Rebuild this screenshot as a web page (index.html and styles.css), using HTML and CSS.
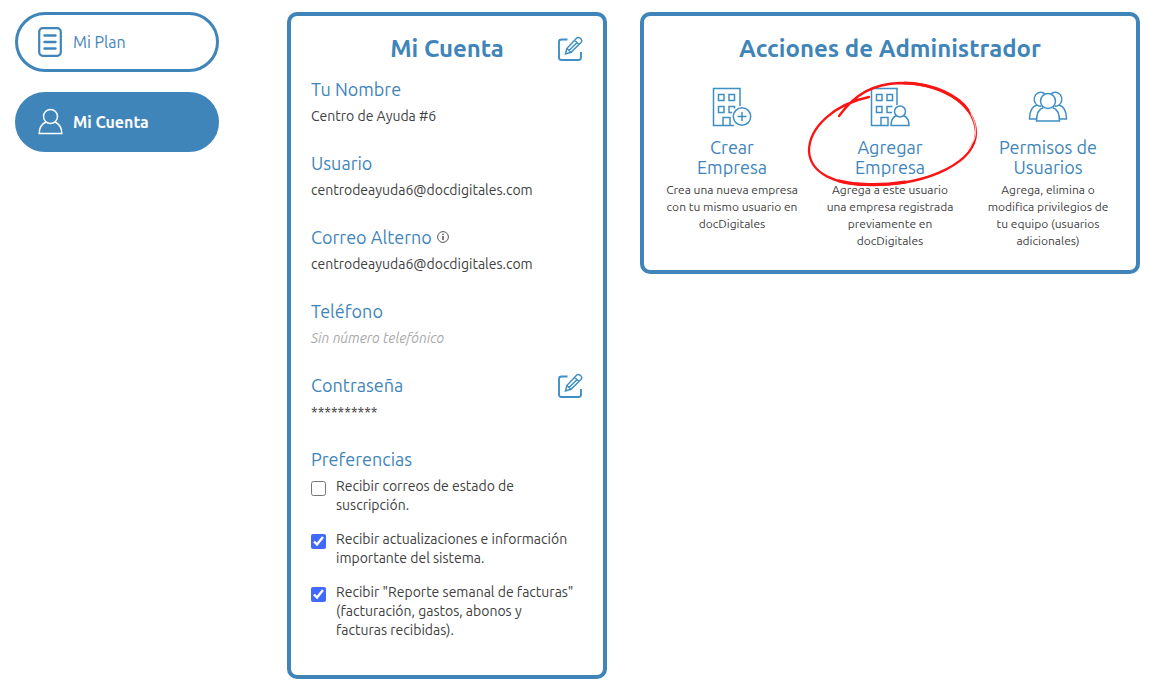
FILE: index.html
```html
<!DOCTYPE html>
<html lang="es">
<head>
<meta charset="utf-8">
<title>Mi Cuenta</title>
<link rel="stylesheet" href="styles.css">
</head>
<body>
<div class="page">
  <nav class="sidebar">
    <a class="pill" href="#plan">
      <svg class="pill-icon" viewBox="0 0 26 30" width="26" height="30"><rect x="2.200" y="1.200" width="21.600" height="27.600" rx="3.500" stroke-width="2.200"/><path d="M7.500 8.500h11M7.500 15h11M7.500 21.500h11" stroke-width="2.400" stroke-linecap="round"/></svg>
      Mi Plan
    </a>
    <a class="pill pill-active" href="#cuenta" aria-current="page">
      <svg class="pill-icon" viewBox="0 0 26 30" width="26" height="30"><circle cx="13.500" cy="9.500" r="7" stroke-width="1.500"/><path d="M9 15C4.500 17 2.200 21 2.200 26.500H24.800C24.800 21 22.500 17 18 15" stroke-width="1.500"/></svg>
      Mi Cuenta
    </a>
  </nav>

  <main class="card account">
    <header class="account-head">
      <h1 class="card-title">Mi Cuenta</h1>
      <button class="edit" type="button" aria-label="Editar cuenta">
        <svg viewBox="0 0 26 26" width="26" height="26"><path d="M10.500 3.500H4.500Q2 3.500 2 6V21.500Q2 24 4.500 24H21.500Q24 24 24 21.500V16" stroke-width="1.900"/><path d="M8.500 18L9.800 12.500L19.500 2.200Q21.300 .5 23.500 2.500T24 6.500L14 16.300ZM9.800 12.500L14 16.300M17.500 4.300L21.800 8.300M12 14.500L20.200 6.500" stroke-width="1.500"/></svg>
      </button>
    </header>
    <section class="field">
      <h2 class="label">Tu Nombre</h2>
      <p class="value">Centro de Ayuda #6</p>
    </section>
    <section class="field">
      <h2 class="label">Usuario</h2>
      <p class="value">centrodeayuda6@docdigitales.com</p>
    </section>
    <section class="field">
      <h2 class="label">Correo Alterno
        <svg class="info" viewBox="0 0 12 12" width="12" height="12"><circle cx="6" cy="6" r="5.400"/><path d="M6 5v4M6 2.700v1.300" stroke-width="1.500"/></svg>
      </h2>
      <p class="value">centrodeayuda6@docdigitales.com</p>
    </section>
    <section class="field">
      <h2 class="label">Teléfono</h2>
      <p class="value value-empty">Sin número telefónico</p>
    </section>
    <section class="field field-editable">
      <div>
        <h2 class="label">Contraseña</h2>
        <p class="value">**********</p>
      </div>
      <button class="edit" type="button" aria-label="Editar contraseña">
        <svg viewBox="0 0 26 26" width="26" height="26"><path d="M10.500 3.500H4.500Q2 3.500 2 6V21.500Q2 24 4.500 24H21.500Q24 24 24 21.500V16" stroke-width="1.900"/><path d="M8.500 18L9.800 12.500L19.500 2.200Q21.300 .5 23.500 2.500T24 6.500L14 16.300ZM9.800 12.500L14 16.300M17.500 4.300L21.800 8.300M12 14.500L20.200 6.500" stroke-width="1.500"/></svg>
      </button>
    </section>
    <section>
      <h2 class="label">Preferencias</h2>
      <div class="prefs">
        <label class="pref"><input class="check" type="checkbox"><span>Recibir correos de estado de suscripción.</span></label>
        <label class="pref"><input class="check" type="checkbox" checked><span>Recibir actualizaciones e información importante del sistema.</span></label>
        <label class="pref"><input class="check" type="checkbox" checked><span>Recibir "Reporte semanal de facturas" (facturación, gastos, abonos y facturas recibidas).</span></label>
      </div>
    </section>
  </main>

  <section class="card admin">
    <h2 class="card-title">Acciones de Administrador</h2>
    <div class="actions">
      <a class="action" href="#crear">
        <svg class="action-icon" viewBox="0 0 40 40" width="40" height="40"><path d="M28 19V1.500H1.500V38.500H22M11 38.500V30.500H18V38.500"/><path d="M6.500 7.500h5.500v6h-5.500zM17 7.500h5.500v6h-5.500zM6.500 19.500h5.500v6h-5.500zM20 25.500h-3v-6h5.500v2"/><circle cx="30" cy="29.500" r="8.700"/><path d="M30 25v9M25.500 29.500h9"/></svg>
        <h3 class="action-name">Crear Empresa</h3>
        <p class="action-text">Crea una nueva empresa con tu mismo usuario en docDigitales</p>
      </a>
      <a class="action" href="#agregar">
        <svg class="action-icon" viewBox="0 0 40 40" width="40" height="40"><path d="M27 18V1.500H1.500V38.500H18V30.500H11V38.500"/><path d="M6.500 7.500h5.500v6h-5.500zM17 7.500h5.500v6h-5.500zM6.500 19.500h5.500v6h-5.500zM22 25.500h-5v-6h5.500"/><circle cx="30" cy="24.500" r="5.500"/><path d="M26.500 28.500C23 30 21 33 21 38.500H39C39 33 37 30 33.500 28.500"/></svg>
        <h3 class="action-name">Agregar Empresa</h3>
        <p class="action-text">Agrega a este usuario una empresa registrada previamente en docDigitales</p>
        <svg class="ring" viewBox="0 0 176 110" width="176" height="110" aria-hidden="true">
          <path d="M64 16C30 23 4 46 4 70C5 92 30 105 70 104C125 103 171 81 171 51C169 22 135 2 95 2C68 3 50 13 34 35" stroke-width="2.300"/>
          <path d="M34 100C50 104 75 105 100 101M100 2C130 3 153 15 163 29" stroke-width="3"/>
          <path class="ring-gloss" d="M166 33C171 43 172 51 169 59L164 67" stroke-width="1"/>
        </svg>
      </a>
      <a class="action" href="#permisos">
        <svg class="action-icon" viewBox="0 0 40 40" width="40" height="40"><circle cx="20" cy="14" r="7.500"/><path d="M15.500 20.500C11 22 8.500 26 8.500 34H31.500C31.500 26 29 22 24.500 20.500"/><path d="M17 7A6.500 7 0 1 0 9 18C4 19.500 1.500 24.500 1.500 32H8.500M23 7A6.500 7 0 1 1 31 18C36 19.500 38.500 24.500 38.500 32H31.500M9 18Q11 19.500 13.500 19M31 18Q29 19.500 26.500 19"/></svg>
        <h3 class="action-name">Permisos de Usuarios</h3>
        <p class="action-text">Agrega, elimina o modifica privilegios de tu equipo (usuarios adicionales)</p>
      </a>
    </div>
  </section>
</div>
</body>
</html>
```
FILE: styles.css
```css
* { box-sizing: border-box; }

body {
  margin: 0;
  background: #fff;
  color: #404040;
  font: 14px/20px Ubuntu, "Noto Sans", "Open Sans", sans-serif;
}

h1, h2, h3, p { margin: 0; }
a { color: inherit; text-decoration: none; }
svg { fill: none; stroke: currentColor; stroke-width: 1.5; }

.page {
  display: flex;
  align-items: flex-start;
  padding: 12px 22px 15px 15px;
}

.sidebar {
  display: flex;
  flex: 0 0 204px;
  flex-direction: column;
  gap: 20px;
  margin-right: 68px;
}

.pill {
  display: flex;
  align-items: center;
  gap: 10px;
  height: 60px;
  padding: 0 19px;
  border: 3px solid #3f85b9;
  border-radius: 30px;
  color: #3f85b9;
  font-size: 16px;
}

.pill-active {
  background: #3f85b9;
  color: #fff;
  font-weight: 700;
}

.card {
  border: 4px solid #3f85b9;
  border-radius: 10px;
}

.card-title {
  color: #3f85b9;
  font-size: 24px;
  line-height: 32px;
  text-align: center;
}

.account {
  flex: 0 0 320px;
  margin-right: 33px;
  padding: 17px 20px 35px;
}

.account-head {
  display: grid;
  grid-template-columns: 26px 1fr 26px;
  align-items: center;
  margin-bottom: 12px;
}

.account-head .card-title { grid-column: 2; }

.edit {
  width: 26px;
  height: 26px;
  padding: 0;
  border: 0;
  background: none;
  color: #3f8fc4;
  cursor: pointer;
}

.edit svg { display: block; }

.field { margin-bottom: 25px; }

.field-editable {
  display: flex;
  justify-content: space-between;
}

.label {
  display: flex;
  align-items: center;
  gap: 5px;
  margin-bottom: 5px;
  color: #3f85b9;
  font-size: 18px;
  font-weight: 400;
  line-height: 24px;
}

.info { color: #555; stroke-width: 1; }

.value-empty {
  color: #a9a9a9;
  font-style: italic;
}

.prefs {
  display: flex;
  flex-direction: column;
  gap: 15px;
  padding: 1px 8px 0 0;
}

.pref {
  display: flex;
  align-items: flex-start;
  gap: 10px;
  line-height: 19px;
}

.check {
  flex: none;
  width: 15px;
  height: 15px;
  margin: 4px 0 0;
  accent-color: #4169ff;
}

.admin {
  flex: 1;
  padding: 17px 9px 21px;
}

.actions {
  display: grid;
  grid-template-columns: repeat(3, 1fr);
  margin-top: 22px;
}

.action {
  position: relative;
  display: flex;
  flex-direction: column;
  align-items: center;
  padding: 0 12px;
  text-align: center;
}

.action-icon { color: #3f8fc4; }

.action-name {
  margin: 10px 16px 4px;
  color: #3f85b9;
  font-size: 18px;
  font-weight: 400;
  line-height: 20px;
}

.action-text {
  font-size: 12px;
  line-height: 17px;
}

.ring {
  position: absolute;
  top: -6px;
  left: -6px;
  color: #fa1414;
  stroke-linecap: round;
  pointer-events: none;
}

.ring-gloss { color: #ffd0d0; }
```
